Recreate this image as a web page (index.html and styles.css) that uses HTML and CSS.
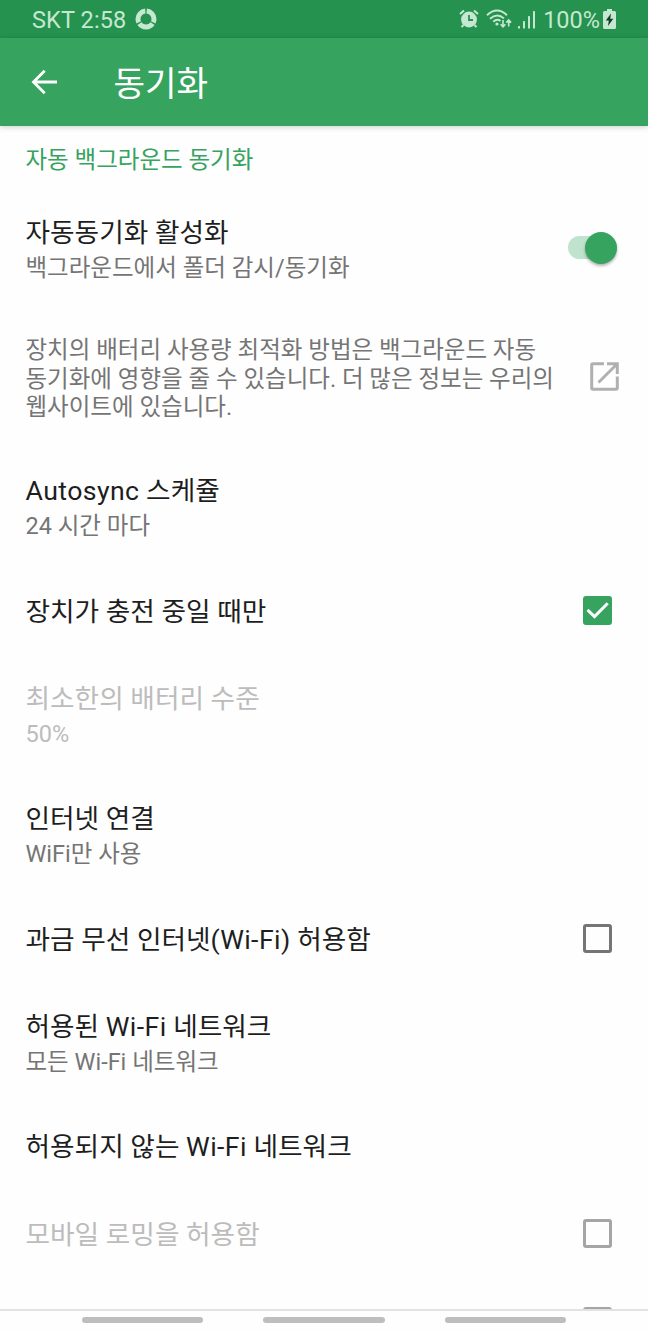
FILE: index.html
```
<!DOCTYPE html>
<html lang="ko">

<head>
    <meta charset="utf-8">
    <meta name="viewport" content="width=device-width, initial-scale=1.0">
    <title>동기화</title>
    <link rel="stylesheet" href="styles.css">
</head>

<body>
    <div class="status">
        <span class="carrier">SKT 2:58</span>
        <svg class="ring" width="22" height="22" viewBox="0 0 22 22">
            <circle cx="11" cy="11" r="8" pathLength="90" stroke-dasharray="27.500 2.500" stroke-dashoffset="21.250" />
        </svg>
        <svg class="alarm" width="20" height="20" viewBox="0 0 20 20">
            <circle cx="10" cy="10.5" r="7.9" fill="#c6e8d1" />
            <path d="M1 5l4-3.6M19 5l-4-3.6M4.5 16l-2 2.2M15.5 16l2 2.2" stroke="#c6e8d1" stroke-width="2" />
            <path d="M10 6v5h4" fill="none" stroke="#25924f" stroke-width="1.8" />
        </svg>
        <svg class="wifi" width="26" height="20" viewBox="0 0 26 20" fill="none" stroke="#c6e8d1" stroke-width="1.9">
            <path d="M1 6.2Q11 -3 21 6.2M4 9.8Q11 3.2 18 9.4M7.3 12.7Q11 9.2 14.5 12" />
            <circle cx="11" cy="15" r="1.6" fill="#c6e8d1" stroke="none" />
            <path d="M17 11v6.5M14.6 15.2l2.4 2.6 2.4-2.6M22.7 17.5v-6.3M20.3 13.6l2.4-2.6 2.4 2.6" stroke-width="1.6" />
        </svg>
        <svg class="signal" width="18" height="19" viewBox="0 0 18 19" fill="#c6e8d1">
            <rect x="0" y="16" width="2" height="2.5" rx=".5" />
            <rect x="5" y="11" width="2" height="7.5" rx=".5" />
            <rect x="10" y="6" width="2" height="12.5" rx=".5" />
            <rect x="15" y="1" width="2" height="17.5" rx=".5" />
        </svg>
        <span class="percent">100%</span>
        <svg class="battery" width="13" height="20" viewBox="0 0 13 20">
            <path d="M4 0h5v2h2.5q1.5 0 1.5 1.5v15q0 1.5-1.5 1.5h-10Q0 20 0 18.500v-15Q0 2 1.500 2H4z" fill="#c6e8d1" />
            <path d="M8 4.500L2.800 11.500h3L5 17l5.300-7.300H7.200z" fill="#123d25" />
        </svg>
    </div>
    <header>
        <svg class="back" width="28" height="28" viewBox="0 0 28 28" fill="none" stroke="#fff" stroke-width="2.8">
            <path d="M27 14H4M14.700 2.800L3.500 14l11.200 11.200" />
        </svg>
        <h1>동기화</h1>
    </header>

    <main>
        <h2>자동 백그라운드 동기화</h2>
        <section class="row double">
            <div class="text">
                <h3>자동동기화 활성화</h3>
                <p>백그라운드에서 폴더 감시/동기화</p>
            </div>
            <span class="switch"><span class="thumb"></span></span>
        </section>
        <section class="row info">
            <p>장치의 배터리 사용량 최적화 방법은 백그라운드 자동<br>동기화에 영향을 줄 수 있습니다. 더 많은 정보는 우리의<br>웹사이트에 있습니다.</p>
            <svg class="open" width="29" height="29" viewBox="0 0 29 29" fill="none" stroke="#b0b0b0" stroke-width="3">
                <path d="M14 1.700H3q-1.300 0-1.300 1.300v23q0 1.300 1.300 1.300h23q1.300 0 1.300-1.300V14.500M17 1.700h10.300V12M27 2L8.500 20.500" />
            </svg>
        </section>
        <section class="row double">
            <div class="text">
                <h3><span class="latin">Autosync</span> 스케쥴</h3>
                <p>24 시간 마다</p>
            </div>
        </section>
        <section class="row">
            <h3>장치가 충전 중일 때만</h3>
            <span class="box checked">
                <svg width="29" height="29" viewBox="0 0 29 29" fill="none" stroke="#fff" stroke-width="3">
                    <path d="M4.500 13.800l7 6.800L24.700 7.200" />
                </svg>
            </span>
        </section>
        <section class="row double disabled">
            <div class="text">
                <h3>최소한의 배터리 수준</h3>
                <p>50%</p>
            </div>
        </section>
        <section class="row double">
            <div class="text">
                <h3>인터넷 연결</h3>
                <p>WiFi만 사용</p>
            </div>
        </section>
        <section class="row">
            <h3>과금 무선 인터넷<span class="latin">(Wi-Fi)</span> 허용함</h3>
            <span class="box"></span>
        </section>
        <section class="row double">
            <div class="text">
                <h3>허용된 <span class="latin">Wi-Fi</span> 네트워크</h3>
                <p>모든 Wi-Fi 네트워크</p>
            </div>
        </section>
        <section class="row">
            <h3>허용되지 않는 <span class="latin">Wi-Fi</span> 네트워크</h3>
        </section>
        <section class="row disabled">
            <h3>모바일 로밍을 허용함</h3>
            <span class="box"></span>
        </section>
        <section class="row disabled">
            <span class="box"></span>
        </section>
    </main>

    <nav>
        <span></span>
        <span></span>
        <span></span>
    </nav>
</body>

</html>
```
FILE: styles.css
```
* {
    box-sizing: border-box;
}

body {
    margin: 0;
    height: 1332px;
    display: flex;
    flex-direction: column;
    overflow: hidden;
    background-color: #fefefe;
    font-family: Roboto, "Noto Sans CJK KR", sans-serif;
}

h1, h2, h3, p {
    margin: 0;
    font-weight: 400;
    white-space: nowrap;
}

svg {
    display: block;
    flex: none;
}

.status {
    height: 38px;
    flex: none;
    display: flex;
    align-items: center;
    padding: 0 32px;
    background-color: #25924f;
    color: #c6e8d1;
    font-size: 23.5px;
    line-height: 38px;
}

.carrier {
    padding-top: 2px;
    letter-spacing: 0.12px;
}

.ring {
    margin-left: 9px;
    fill: none;
    stroke: #c6e8d1;
    stroke-width: 5;
}

.alarm {
    margin-left: auto;
}

.wifi {
    margin-left: 7px;
}

.signal {
    margin-left: 6px;
}

.percent {
    margin-left: 7px;
    padding-top: 2px;
}

.battery {
    margin-left: 3px;
}

header {
    height: 88px;
    flex: none;
    display: flex;
    align-items: center;
    padding-left: 30px;
    background-color: #36a35f;
    color: #fff;
    box-shadow: 0 1px 6px rgba(0, 0, 0, 0.2);
    z-index: 1;
}

h1 {
    margin-left: 55.5px;
    padding-top: 4px;
    font-size: 34.3px;
    line-height: 50px;
}

main {
    flex: 1;
    min-height: 0;
    overflow: hidden;
}

h2 {
    height: 64px;
    padding: 17px 25.5px 0;
    font-size: 23.5px;
    line-height: 34px;
    color: #36a35f;
}

.row {
    height: 87.6px;
    display: flex;
    align-items: center;
    justify-content: space-between;
    padding: 0 36px 0 25.5px;
}

.double {
    height: 120px;
    padding-right: 31px;
}

.info {
    height: 138.4px;
    padding-right: 29.5px;
}

h3 {
    font-size: 26.7px;
    line-height: 36px;
    color: #1e1e1e;
}

.latin {
    letter-spacing: 0.4px;
}

p {
    font-size: 23.5px;
    line-height: 34px;
    color: #757575;
}

.info p {
    line-height: 28.5px;
}

.open {
    margin-bottom: 5px;
}

.disabled h3,
.disabled p {
    color: #bcbcbc;
}

.switch {
    width: 49px;
    height: 23px;
    margin-bottom: 5px;
    display: flex;
    align-items: center;
    justify-content: flex-end;
    border-radius: 12px;
    background-color: #c0e3cd;
}

.thumb {
    width: 32px;
    height: 32px;
    flex: none;
    border-radius: 50%;
    background-color: #36a35f;
    box-shadow: 0 2px 3px rgba(0, 0, 0, 0.3);
}

.box {
    width: 29px;
    height: 29px;
    margin-left: auto;
    margin-bottom: 3px;
    border: 3px solid #757575;
    border-radius: 3px;
}

.checked {
    border: none;
    background-color: #36a35f;
}

.disabled .box {
    border-color: #a5a5a5;
}

nav {
    height: 23px;
    flex: none;
    display: flex;
    justify-content: center;
    gap: 60px;
    padding-top: 6px;
    border-top: 2px solid #e2e2e2;
}

nav span {
    width: 121.5px;
    height: 6px;
    border-radius: 3px;
    background-color: #bebebe;
}
```
